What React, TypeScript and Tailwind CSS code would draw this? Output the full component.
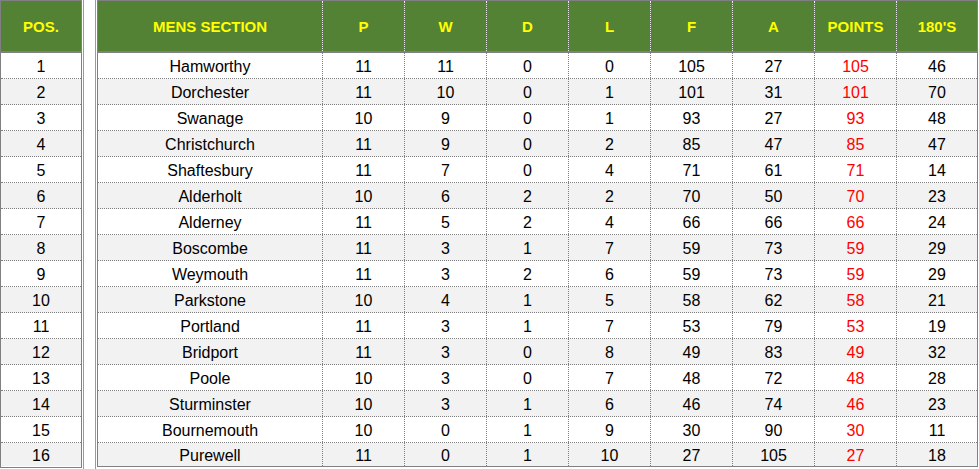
import React from "react";

const rows: [number, string, number, number, number, number, number, number, number, number][] = [
  [1, "Hamworthy", 11, 11, 0, 0, 105, 27, 105, 46],
  [2, "Dorchester", 11, 10, 0, 1, 101, 31, 101, 70],
  [3, "Swanage", 10, 9, 0, 1, 93, 27, 93, 48],
  [4, "Christchurch", 11, 9, 0, 2, 85, 47, 85, 47],
  [5, "Shaftesbury", 11, 7, 0, 4, 71, 61, 71, 14],
  [6, "Alderholt", 10, 6, 2, 2, 70, 50, 70, 23],
  [7, "Alderney", 11, 5, 2, 4, 66, 66, 66, 24],
  [8, "Boscombe", 11, 3, 1, 7, 59, 73, 59, 29],
  [9, "Weymouth", 11, 3, 2, 6, 59, 73, 59, 29],
  [10, "Parkstone", 10, 4, 1, 5, 58, 62, 58, 21],
  [11, "Portland", 11, 3, 1, 7, 53, 79, 53, 19],
  [12, "Bridport", 11, 3, 0, 8, 49, 83, 49, 32],
  [13, "Poole", 10, 3, 0, 7, 48, 72, 48, 28],
  [14, "Sturminster", 10, 3, 1, 6, 46, 74, 46, 23],
  [15, "Bournemouth", 10, 0, 1, 9, 30, 90, 30, 11],
  [16, "Purewell", 11, 0, 1, 10, 27, 105, 27, 18],
];

const heads = ["MENS SECTION", "P", "W", "D", "L", "F", "A", "POINTS", "180'S"];
const widths = ["w-[225px]", "w-[82px]", "w-[82px]", "w-[82px]", "w-[82px]", "w-[82px]", "w-[82px]", "w-[82px]", "w-[80px]"];

export default function App() {
  return (
    <div
      className="w-[979px] h-[469px] bg-white flex overflow-hidden text-black"
      style={{ fontFamily: '"Liberation Sans", Arial, sans-serif' }}
    >
      {/* POS table */}
      <div className="w-[82px] h-[468px] border border-[#808080] flex flex-col shrink-0">
        <div className="h-[52px] pt-[2px] bg-[#548235] border-b-2 border-[#808080] flex items-center justify-center text-[15px] font-bold text-[#FFFF00]">
          POS.
        </div>
        {rows.map((r, i) => (
          <div
            key={i}
            className={`${i === 15 ? "h-[23px]" : "h-[26px] border-b border-dotted border-[#808080]"} ${
              i % 2 === 1 ? "bg-[#F2F2F2]" : "bg-white"
            } flex items-center justify-center pt-[2px] text-[16px]`}
          >
            {r[0]}
          </div>
        ))}
      </div>
      <div className="w-px shrink-0" />
      <div className="w-px h-full bg-[#9a9a9a] shrink-0" />
      <div className="w-[11px] shrink-0" />
      <div className="w-px h-full bg-[#9a9a9a] shrink-0" />
      <div className="w-px shrink-0" />
      {/* MENS table */}
      <div className="w-[881px] h-[467px] border border-[#808080] flex flex-col shrink-0">
        <div className="h-[52px] bg-[#548235] border-b-2 border-[#808080] flex text-[15px] font-bold text-[#FFFF00]">
          {heads.map((h, j) => (
            <div
              key={j}
              className={`${widths[j]} h-full pt-[2px] flex items-center justify-center ${
                j < 8 ? "border-r border-dotted border-[#e8e8e8]" : ""
              }`}
            >
              {h}
            </div>
          ))}
        </div>
        {rows.map((r, i) => (
          <div
            key={i}
            className={`${i === 15 ? "h-[23px]" : "h-[26px] border-b border-dotted border-[#808080]"} ${
              i % 2 === 1 ? "bg-[#F2F2F2]" : "bg-white"
            } flex text-[16px]`}
          >
            {r.slice(1).map((v, j) => (
              <div
                key={j}
                className={`${widths[j]} h-full pt-[2px] flex items-center justify-center ${
                  j < 8 ? "border-r border-dotted border-[#808080]" : ""
                } ${j === 7 ? "text-[#FF0000]" : ""}`}
              >
                {v}
              </div>
            ))}
          </div>
        ))}
      </div>
    </div>
  );
}
